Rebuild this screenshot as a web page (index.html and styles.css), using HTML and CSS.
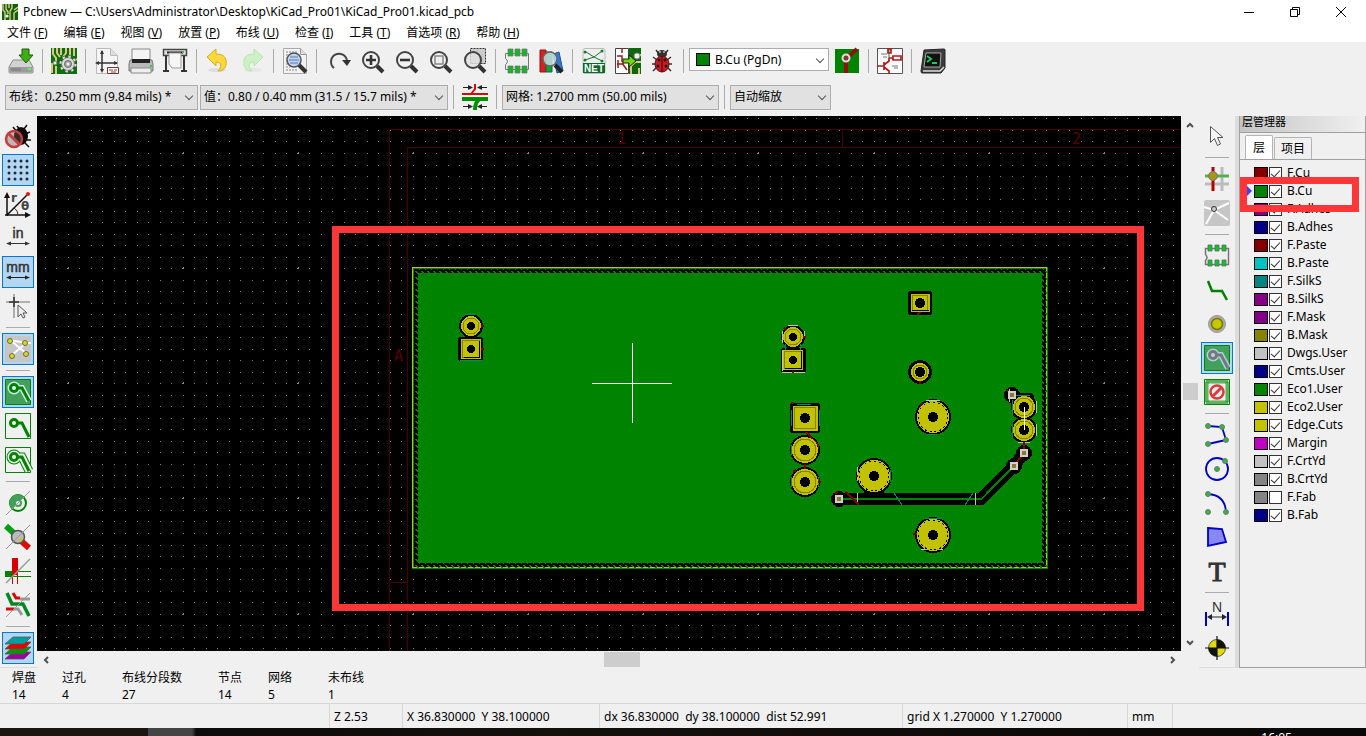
FILE: index.html
```html
<!DOCTYPE html>
<html lang="zh-CN">
<head>
    <meta charset="UTF-8">
    <meta name="viewport" content="width=device-width, initial-scale=1.0">
    <title>Pcbnew</title>
    <link rel="stylesheet" href="styles.css">
</head>
<body>
    <header class="titlebar">
        <svg class="app-icon" viewBox="0 0 16 16"><rect width="16" height="16" fill="#0a6408"/><path d="M1 0v6l2 2v8M4 0v5l2 3v2M7 0v4M10 0v4l-2 3v9M12 6l4-3M12 16V9l4-3" fill="none" stroke="#e0c48c" stroke-width="1.4"/><circle cx="5" cy="12" r="1.6" fill="#fff"/></svg>
        <h1>Pcbnew — C:\Users\Administrator\Desktop\KiCad_Pro01\KiCad_Pro01.kicad_pcb</h1>
        <div class="window-buttons">
            <button aria-label="最小化"><svg viewBox="0 0 12 12"><path d="M1 6.5h10"/></svg></button>
            <button aria-label="还原"><svg viewBox="0 0 12 12"><path d="M1.5 3.5h7v7h-7zM3.5 3.5v-2h7v7h-2"/></svg></button>
            <button aria-label="关闭"><svg viewBox="0 0 12 12"><path d="M1 1l10 10M11 1L1 11"/></svg></button>
        </div>
    </header>

    <nav class="menu">
        <button>文件 (<u>F</u>)</button>
        <button>编辑 (<u>E</u>)</button>
        <button>视图 (<u>V</u>)</button>
        <button>放置 (<u>P</u>)</button>
        <button>布线 (<u>U</u>)</button>
        <button>检查 (<u>I</u>)</button>
        <button>工具 (<u>T</u>)</button>
        <button>首选项 (<u>R</u>)</button>
        <button>帮助 (<u>H</u>)</button>
    </nav>

    <div class="toolbar">
        <button class="tool" aria-label="保存"><svg viewBox="0 0 26 26"><path d="M5 12h16l4 7v5q0 1-1 1H2q-1 0-1-1v-5z" fill="#d2d2d2" stroke="#8c8c8c"/><path d="M1.5 19h23v5h-23z" fill="#9c9c9c"/><path d="M4 20v3M6 20v3M8 20v3M10 20v3M12 20v3" stroke="#777"/><path d="M20 21h3" stroke="#5f5" stroke-width="2"/><path d="M14 1h7v6h4l-7 8-7-8h3z" fill="#3fae10" stroke="#17600a"/></svg></button>
        <i class="sep"></i>
        <button class="tool" aria-label="电路板设置"><svg viewBox="0 0 26 26"><path d="M0 0h26v26H0z" fill="#0a700a"/><path d="M2 0v6l3 4v4M6 0v5l3 4M10 0v7M15 0v5l-3 4M19 0v8M23 0v8M1 15v10M5 18v8M22 14l4-3" fill="none" stroke="#dec48a" stroke-width="2"/><circle cx="17" cy="16" r="7.5" fill="none" stroke="#555" stroke-width="3" stroke-dasharray="3 2.9"/><circle cx="17" cy="16" r="6.5" fill="#ddd" stroke="#666"/><circle cx="17" cy="16" r="7.5" fill="none" stroke="#ddd" stroke-width="2" stroke-dasharray="2.4 3.5"/><circle cx="17" cy="16" r="3.5" fill="#aaa" stroke="#666"/><circle cx="17" cy="16" r="1.5" fill="#eee"/><circle cx="4" cy="15" r="2" fill="#eee" stroke="#777"/></svg></button>
        <i class="sep"></i>
        <button class="tool" aria-label="页面设置"><svg viewBox="0 0 26 26"><path d="M2.5.5h14l7 7v18h-21z" fill="#f5f5f5" stroke="#bbb"/><path d="M16.5.5v7h7" fill="#ddd" stroke="#bbb"/><path d="M8 3v20M3 15h20" stroke="#333" stroke-width="1.5"/><path d="M8 2l-2 4h4zM8 25l-2-4h4zM1 15l4-2v4zM24 15l-4-2v4z" fill="#333"/><path d="M13.5 19.5h11v6h-11z" fill="#fff" stroke="#733"/><path d="M15 22h4M20 22h3M17 24h5" stroke="#844"/></svg></button>
        <button class="tool" aria-label="打印"><svg viewBox="0 0 26 26"><path d="M4 1h18v12H4z" fill="#f4f4f4" stroke="#888"/><path d="M2 12h22l1 4v7H1v-7z" fill="#b9b9b9" stroke="#777"/><path d="M4 11h18v4H4z" fill="#222"/><path d="M3 20h20v5H3z" fill="#eee" stroke="#888"/><path d="M22 18h2" stroke="#3c3" stroke-width="2"/></svg></button>
        <button class="tool" aria-label="绘制"><svg viewBox="0 0 26 26"><path d="M1.5 1.5h23v6h-23z" fill="#ddd" stroke="#444" stroke-width="1.5"/><path d="M5 4.500h16" stroke="#222" stroke-width="2"/><path d="M7 5h12v15H10l-3-4z" fill="#f7f7f7" stroke="#999"/><path d="M4 8v14M22 8v14M1 23h6M19 23h6" stroke="#333" stroke-width="2"/><path d="M20 4h2" stroke="#3c3" stroke-width="2"/></svg></button>
        <i class="sep"></i>
        <button class="tool" aria-label="撤销"><svg viewBox="0 0 26 26"><ellipse cx="12" cy="22" rx="9" ry="2" fill="#ddd"/><path d="M2 9l9-8v5c9 0 11 5 10 11-1 4-4 6-8 6 4-4 4-9-2-9v4z" fill="#f8d83a" stroke="#d8ac20"/></svg></button>
        <button class="tool" aria-label="重做"><svg viewBox="0 0 26 26"><ellipse cx="14" cy="22" rx="9" ry="2" fill="#e4e8e2"/><path d="M24 9l-9-8v5C6 6 4 11 5 17c1 4 4 6 8 6-4-4-4-9 2-9v4z" fill="#cdf0c4" stroke="#b9e4b0"/></svg></button>
        <i class="sep"></i>
        <button class="tool" aria-label="查找"><svg viewBox="0 0 26 26"><path d="M1.5.5h17l6 6v19h-23z" fill="#f2f2f2" stroke="#aaa"/><path d="M18.500.5v6h6" fill="#ddd" stroke="#999"/><path d="M4 4h11M4 7h4M4 10h3M4 13h3M4 16h3M4 19h4M4 22h12" stroke="#888" stroke-dasharray="2 1"/><path d="M17 17l7 7" stroke="#333" stroke-width="4"/><circle cx="12" cy="12" r="7" fill="#bfd5f0" stroke="#555" stroke-width="1.5"/><path d="M8 9h8M7 12h10M8 15h8" stroke="#5878b8"/></svg></button>
        <i class="sep"></i>
        <button class="tool" aria-label="刷新"><svg viewBox="0 0 26 26"><path d="M9 20A8 8 0 1 1 22 13" fill="none" stroke="#444" stroke-width="2"/><path d="M17 12h9l-4 6z" fill="#333"/></svg></button>
        <button class="tool" aria-label="放大"><svg viewBox="0 0 26 26"><path d="M18 18l6 6" stroke="#333" stroke-width="4"/><circle cx="12" cy="12" r="8" fill="#f2f2f2" stroke="#444" stroke-width="2"/><path d="M7 12h10M12 7v10" stroke="#333" stroke-width="2.600"/></svg></button>
        <button class="tool" aria-label="缩小"><svg viewBox="0 0 26 26"><path d="M18 18l6 6" stroke="#333" stroke-width="4"/><circle cx="12" cy="12" r="8" fill="#f2f2f2" stroke="#444" stroke-width="2"/><path d="M7 12h10" stroke="#333" stroke-width="2.600"/></svg></button>
        <button class="tool" aria-label="适合页面"><svg viewBox="0 0 26 26"><path d="M18 18l6 6" stroke="#333" stroke-width="4"/><circle cx="12" cy="12" r="8" fill="#f2f2f2" stroke="#444" stroke-width="2"/><path d="M8 8h8v8H8z" fill="#eee" stroke="#888" stroke-width="1.5"/></svg></button>
        <button class="tool" aria-label="缩放到选区"><svg viewBox="0 0 26 26"><path d="M9.500.5h15v15h-15z" fill="#ccc" stroke="#333" stroke-dasharray="2 1"/><path d="M18 18l6 6" stroke="#333" stroke-width="4"/><circle cx="12" cy="12" r="8" fill="#e2e2e2" fill-opacity=".8" stroke="#444" stroke-width="2"/></svg></button>
        <i class="sep"></i>
        <button class="tool" aria-label="封装编辑器"><svg viewBox="0 0 26 26"><path d="M1.5 5.500h23v16h-23v-5q4-3 0-6z" fill="#eee" stroke="#777"/><path d="M4 1h5v7H4zM11 1h5v7h-5zM18 1h5v7h-5zM4 18h5v7H4zM11 18h5v7h-5zM18 18h5v7h-5z" fill="#16b428" stroke="#777" stroke-width=".8"/></svg></button>
        <button class="tool" aria-label="封装浏览器"><svg viewBox="0 0 26 26"><path d="M2 2h6v22H2z" fill="#d82020" stroke="#911"/><path d="M8 4h6v20H8z" fill="#18a030" stroke="#165"/><path d="M15 6l6-2 4 19-6 2z" fill="#3478d8" stroke="#258"/><path d="M17 17l7 7" stroke="#222" stroke-width="4"/><circle cx="12" cy="11" r="7" fill="#d4e4ee" fill-opacity=".8" stroke="#666" stroke-width="1.5"/></svg></button>
        <i class="sep"></i>
        <button class="tool" aria-label="加载网表"><svg viewBox="0 0 26 26"><rect x="2" y=".5" width="22" height="25" rx="2" fill="#eee" stroke="#bbb"/><path d="M5 4l8 5 8-6M4 12l9-3 8 4" fill="none" stroke="#197a30"/><g fill="#197a30"><circle cx="4" cy="4" r="1.500"/><circle cx="21" cy="3" r="1.500"/><circle cx="4" cy="12" r="1.500"/><circle cx="21" cy="13" r="1.500"/></g><path d="M2 15h22v10H2z" fill="#0d6a2e"/><text class="net-label" x="13" y="24">NET</text></svg></button>
        <button class="tool" aria-label="从原理图更新"><svg viewBox="0 0 26 26"><path d="M.5.500h13v25H.5z" fill="#fff" stroke="#444"/><path d="M14 0h12v26H14z" fill="#0b680b"/><path d="M7 0v5M2 8h5v6M2 16h5l4-4M7 15l5 7M3 12v8" fill="none" stroke="#a01818" stroke-width="1.500"/><path d="M16 26v-8l4-4h6M21 7h5M24 26v-6" fill="none" stroke="#dec48a" stroke-width="2"/><circle cx="22" cy="8" r="3" fill="#eee" stroke="#888"/><path d="M8 11h6V7l7 6-7 6v-4H8z" fill="#76d415" stroke="#142c08"/></svg></button>
        <button class="tool" aria-label="设计规则检查"><svg viewBox="0 0 26 26"><path d="M7 2l3 4M19 2l-3 4M4 9l4 3M22 9l-4 3M3 16h4M23 16h-4M4 23l4-4M22 23l-4-4" stroke="#333" stroke-width="1.500"/><ellipse cx="13" cy="6" rx="5" ry="4" fill="#333"/><ellipse cx="13" cy="16" rx="7" ry="8" fill="#c81c24" stroke="#611"/><path d="M13 8v16" stroke="#400"/><g fill="#211"><circle cx="10" cy="12" r="1.500"/><circle cx="16" cy="12" r="1.500"/><circle cx="9" cy="18" r="1.500"/><circle cx="17" cy="18" r="1.500"/></g><path d="M10 4h2M14 4h2" stroke="#fff"/></svg></button>
        <i class="sep"></i>
        <span class="drop drop-layer">
            <i class="swatch c-green"></i>
            <select aria-label="当前层"><option>B.Cu (PgDn)</option></select>
        </span>
        <button class="tool" aria-label="层对"><svg viewBox="0 0 26 26"><path d="M1 1h24v24H1z" fill="#008400"/><path d="M12 25V12M14 9l9-8" stroke="#8c1212" stroke-width="4"/><circle cx="12" cy="10" r="3.500" fill="#8c3434" stroke="#ddd" stroke-width="2"/></svg></button>
        <i class="sep"></i>
        <button class="tool" aria-label="原理图编辑器"><svg viewBox="0 0 26 26"><path d="M.5.500h25v25H.5z" fill="#fbfbfb" stroke="#555"/><path d="M12 0v10" stroke="#19801d"/><path d="M11 1h3v4h-3zM16 8h8v4h-8zM12 10h4M0 18h7M7 14v8M7 17l5-4v-3M7 19l5 4v3" fill="none" stroke="#b01c1c" stroke-width="1.700"/><path d="M4 6h6M6 9h4M15 18h6M17 20h4" stroke="#777"/></svg></button>
        <i class="sep"></i>
        <button class="tool" aria-label="脚本控制台"><svg viewBox="0 0 26 26"><path d="M4 2l20-1q1 0 1 1v18l-4 5H2q-1 0-1-2z" fill="#3c3c3c" stroke="#222"/><path d="M6 5h15l-1 14H4z" fill="#111" stroke="#aaa"/><path d="M7 8l4 3-4 3M12 15h5" fill="none" stroke="#18c860" stroke-width="2"/><path d="M3 23h17l4-4" fill="none" stroke="#ddd" stroke-width="1.500"/></svg></button>
    </div>

    <div class="toolbar toolbar-options">
        <span class="drop drop-track"><select aria-label="布线宽度"><option>布线：0.250 mm (9.84 mils) *</option></select></span>
        <span class="drop drop-via"><select aria-label="过孔尺寸"><option>值：0.80 / 0.40 mm (31.5 / 15.7 mils) *</option></select></span>
        <i class="sep"></i>
        <button class="tool" aria-label="自动布线宽度"><svg viewBox="0 0 26 26"><path d="M0 10h26" stroke="#d80808" stroke-width="2"/><path d="M13 0v5l-4 5" fill="none" stroke="#d80808" stroke-width="2"/><path d="M0 15h26" stroke="#009000" stroke-width="4"/><path d="M17 16q-4 2-4 10" fill="none" stroke="#009000" stroke-width="4"/><path d="M1 3.500h7M25 3.500h-7M1 22.500h7M25 22.500h-7" stroke="#222"/><path d="M6 1l5 2.500-5 2.500zM20 1l-5 2.500 5 2.500zM6 20l5 2.500-5 2.500zM20 20l-5 2.500 5 2.500z" fill="#222"/></svg></button>
        <i class="sep"></i>
        <span class="drop drop-grid"><select aria-label="网格"><option>网格: 1.2700 mm (50.00 mils)</option></select></span>
        <i class="sep"></i>
        <span class="drop drop-zoom"><select aria-label="缩放"><option>自动缩放</option></select></span>
    </div>

    <main class="workspace">
        <div class="rail">
            <button class="tool" aria-label="关闭设计规则检查"><svg viewBox="0 0 26 26"><path d="M12 3l3 4M22 2l-3 4M25 9l-5 2M26 17h-5M24 24l-4-4M8 4l4 5" stroke="#111" stroke-width="1.500"/><ellipse cx="16" cy="13" rx="7" ry="9" fill="#0a0a0a"/><circle cx="9" cy="16" r="8" fill="#666" fill-opacity=".4" stroke="#c83c3c" stroke-width="2.500"/><path d="M4 11l10 10" stroke="#c83c3c" stroke-width="3"/></svg></button>
            <button class="tool on" aria-label="显示网格"><svg viewBox="0 0 26 26"><path d="M4 4h20M4 10h20M4 16h20M4 22h20" stroke="#222c38" stroke-width="3" stroke-linecap="round" stroke-dasharray="0 6"/></svg></button>
            <button class="tool" aria-label="极坐标"><svg viewBox="0 0 26 26"><path d="M2 25V4M0 24h22M2 24L22 4" fill="none" stroke="#111" stroke-width="1.500"/><path d="M2 1L-1 7h6zM26 24l-6-3v6z" fill="#111"/><path d="M9 17q4 2 4 7" fill="none" stroke="#333"/><circle cx="23" cy="3" r="2" fill="#f01010"/><text class="glyph" x="6" y="11">r</text><text class="glyph" x="16" y="19">θ</text></svg></button>
            <button class="tool" aria-label="英寸"><svg viewBox="0 0 26 26"><text class="unit" x="13" y="13">in</text><path d="M4 18.500h18" stroke="#333"/><path d="M1 18.500l5-2v4zM25 18.500l-5-2v4z" fill="#333"/></svg></button>
            <button class="tool on" aria-label="毫米"><svg viewBox="0 0 26 26"><text class="unit" x="13" y="13">mm</text><path d="M4 18.500h18" stroke="#222"/><path d="M1 18.500l5-2v4zM25 18.500l-5-2v4z" fill="#222"/></svg></button>
            <button class="tool" aria-label="光标形状"><svg viewBox="0 0 26 26"><path d="M1 9h24M9 1v24" stroke="#999" stroke-width="1.500"/><path d="M4 9h10M9 4v10" stroke="#333" stroke-width="1.500"/><path d="M13 12v12l3-3 2 4 2-1-2-4h4z" fill="#eee" stroke="#555"/></svg></button>
            <i class="rule"></i>
            <button class="tool on" aria-label="显示飞线"><svg viewBox="0 0 26 26"><rect width="26" height="26" rx="2" fill="#c6c6c6"/><path d="M5 4l16 3h5M5 4l17 14M21 7L6 20" stroke="#fff" stroke-width="2" fill="none"/><g fill="#d8e000" stroke="#666"><circle cx="5" cy="5" r="2.500"/><circle cx="20" cy="7" r="2.500"/><circle cx="7" cy="20" r="2.500"/><circle cx="21" cy="18" r="2.500"/></g></svg></button>
            <i class="rule"></i>
            <button class="tool on" aria-label="显示填充区域"><svg viewBox="0 0 26 26"><path d="M.5.500h25v25H.5z" fill="#42a05a" stroke="#048404"/><path d="M9 9h8l7 13" fill="none" stroke="#cfe6e8" stroke-width="6"/><circle cx="9" cy="9" r="6.500" fill="#cfe6e8"/><path d="M9 9h8l7 13" fill="none" stroke="#008400" stroke-width="3"/><circle cx="9" cy="9" r="3.500" fill="#dff" stroke="#008400" stroke-width="3"/></svg></button>
            <button class="tool" aria-label="隐藏填充区域"><svg viewBox="0 0 26 26"><path d="M.5.500h25v25H.5z" fill="none" stroke="#048404"/><path d="M9 10h8l7 14" fill="none" stroke="#008400" stroke-width="3"/><circle cx="9" cy="10" r="3.500" fill="#fff" stroke="#008400" stroke-width="3"/></svg></button>
            <button class="tool" aria-label="区域轮廓"><svg viewBox="0 0 26 26"><path d="M.5.500h25v25H.5z" fill="none" stroke="#048404"/><path d="M9 10h8l7 14" fill="none" stroke="#008400" stroke-width="9"/><circle cx="9" cy="10" r="7.500" fill="#008400"/><path d="M9 10h8l7 14" fill="none" stroke="#f0f0f0" stroke-width="7"/><circle cx="9" cy="10" r="6.500" fill="#f0f0f0"/><path d="M9 10h8l7 14" fill="none" stroke="#008400" stroke-width="3"/><circle cx="9" cy="10" r="3.500" fill="#fff" stroke="#008400" stroke-width="3"/></svg></button>
            <i class="rule"></i>
            <button class="tool" aria-label="焊盘轮廓"><svg viewBox="0 0 26 26"><circle cx="13" cy="13" r="8" fill="#eee" stroke="#008400" stroke-width="2"/><path d="M7 19A8 8 0 0 1 19 7z" fill="#42a05a"/><circle cx="13" cy="13" r="3" fill="#eee" stroke="#42a05a" stroke-width="2"/><path d="M1 25L25 1" stroke="#999"/></svg></button>
            <button class="tool" aria-label="过孔轮廓"><svg viewBox="0 0 26 26"><path d="M1 2l11 10" stroke="#00a010" stroke-width="6"/><path d="M14 15l10 9" stroke="#e00808" stroke-width="6"/><circle cx="13" cy="13" r="6.500" fill="#bbb" stroke="#555" stroke-width="1.500"/><path d="M13 17l4-4v4z" fill="#dfc200"/><path d="M1 25L25 1" stroke="#999"/></svg></button>
            <button class="tool" aria-label="布线轮廓"><svg viewBox="0 0 26 26"><path d="M10 0v26" stroke="#d80000" stroke-width="6"/><path d="M0 16h8" stroke="#008400" stroke-width="6"/><path d="M8 17h5v9H8z" fill="#f0f0f0"/><path d="M7.500 13v13M12.500 13v13" stroke="#d80000"/><path d="M12 13.500h14M8 18.500h18" stroke="#008400"/><path d="M1 25L25 1" stroke="#999" stroke-width="1.500"/></svg></button>
            <button class="tool" aria-label="高对比度"><svg viewBox="0 0 26 26"><path d="M2 1l5 11h11l6 12" fill="none" stroke="#008a20" stroke-width="3.500"/><path d="M8 1l3 5h4" fill="none" stroke="#d80808" stroke-width="3"/><path d="M15 7h10M9 17h4l4 6" fill="none" stroke="#999" stroke-width="3"/><path d="M1 17h8" stroke="#d80808" stroke-width="3"/><path d="M1 25L25 1" stroke="#999"/></svg></button>
            <i class="rule"></i>
            <button class="tool on" aria-label="层管理器"><svg viewBox="0 0 26 26"><g stroke="#555" stroke-width=".8"><path d="M8 17h18l-7 7H0z" fill="#a000a0"/><path d="M8 12h18l-7 7H0z" fill="#00980c"/><path d="M8 7h18l-7 7H0z" fill="#e60000"/><path d="M8 2h18l-7 7H0z" fill="#00a0a0"/></g></svg></button>
        </div>

        <section class="view">
            <svg class="board" viewBox="37 116 1144 535" preserveAspectRatio="xMinYMin slice">
                <defs>
                    <pattern id="hatch" width="6" height="6" patternUnits="userSpaceOnUse">
                        <rect width="6" height="6" fill="#000"/>
                        <path d="M1 1h1v1h1v1h1v1h1v1h1" fill="none" stroke="#008400"/>
                    </pattern>
                </defs>
                <path id="grid-dots" class="dots"/>
                <g class="sheet">
                    <path d="M389.500 651V129.500H1181M407.500 651V147.500H1181M389 582.500h18M842.500 129v18"/>
                    <text x="617" y="144">1</text>
                    <text x="1072" y="144">2</text>
                    <text x="394" y="361">A</text>
                </g>
                <rect x="412" y="267" width="636" height="302" fill="#008400"/>
                <path d="M414 269h632v298H414zM418 273v290h624V273z" fill="url(#hatch)" fill-rule="evenodd"/>
                <path class="edge" d="M412.500 568V267.500H1047"/>
                <path class="edge edge-dash" d="M412 567.500h634.500V268"/>

                <!-- clearances cut out of the copper zone -->
                <g class="clear">
                    <circle cx="471" cy="326" r="12"/><rect x="458" y="337" width="25" height="24" rx="3"/>
                    <circle cx="793" cy="337" r="12"/><rect x="781" y="348" width="25" height="25" rx="3"/>
                    <rect x="908" y="291" width="24" height="24" rx="3"/><circle cx="920" cy="372" r="12"/>
                    <rect x="790" y="403" width="30" height="30" rx="3"/><circle cx="805" cy="450" r="15"/><circle cx="805" cy="482" r="15"/>
                    <circle cx="933" cy="417" r="18"/><circle cx="874" cy="476" r="18"/><circle cx="933" cy="535" r="18"/>
                    <path d="M864 485h20v10h-20z"/>
                    <circle cx="1024" cy="407" r="13"/><circle cx="1024" cy="430" r="13"/><rect x="1012" y="393" width="22" height="24" rx="4"/>
                    <circle cx="1012" cy="395" r="8"/><circle cx="1024" cy="453" r="8"/><circle cx="1014" cy="466" r="8"/><circle cx="839" cy="499" r="8"/>
                </g>
                <path class="gap" d="M839 499h142.500l32.500-33 10-13"/>
                <path class="track" d="M839 499h142.500l32.500-33"/>

                <g class="silk-white">
                    <path d="M788 325.500h10M782.500 331v12M782.500 350v21M782 372.500h23M804.500 331v6M857.500 493v12M975.500 493v12"/>
                    <path d="M1036.500 401v12M1036.500 424v12M1018 442.500h12M926 400.500h14M857.500 467v14M921 549.500h22M1009.500 389v13"/>
                </g>
                <g class="silk-teal">
                    <path d="M465 314.500h10M460 360.500h22M785.500 344v6M800.500 344v6M894 493l8 12M973 493l-8 12M797 404.500h14M791.500 410v16M819.500 410v16"/>
                    <path d="M791.500 445v10M791.500 477v10M818.500 477v10M1013 395.500h17M1012.500 400v16M1012.500 424v14M925 518.500h17M927 434.500h10M890.500 470v12"/>
                </g>
                <g class="silk-red">
                    <path d="M806 432l12 13v4M805 464v7M846 492l13 13M1024 442v11l-10 13M479 326h5M478 349h6M806 337h-4M793 371v2M917 315l3-3M920 380v4M818 482h3M913 534h4M856 476h4M791 403h3M920 408l2-5M838 492l-3 1M1007 390l3 3M793 472l3-2M784 328l3 3"/>
                </g>

                <g class="pads">
                    <circle cx="471" cy="326" r="10"/><rect x="461" y="339" width="20" height="20"/>
                    <circle cx="793" cy="337" r="10"/><rect x="783" y="350" width="20" height="20"/>
                    <rect x="911" y="294" width="19" height="18"/><circle cx="920" cy="372" r="9"/>
                    <rect x="793" y="406" width="25" height="25"/><circle cx="805" cy="450" r="13"/><circle cx="805" cy="482" r="13"/>
                    <circle cx="1024" cy="407" r="11"/><circle cx="1024" cy="430" r="11"/>
                    <circle cx="933" cy="417" r="16"/><circle cx="874" cy="476" r="16"/><circle cx="933" cy="535" r="16"/>
                </g>
                <g class="mask">
                    <circle cx="471" cy="326" r="8"/><rect x="462.500" y="340.500" width="17" height="17"/>
                    <circle cx="793" cy="337" r="8"/><rect x="784.500" y="351.500" width="17" height="17"/>
                    <rect x="912.500" y="295.500" width="15" height="15"/><circle cx="920" cy="372" r="7"/>
                    <rect x="794.500" y="407.500" width="21" height="21"/><circle cx="805" cy="450" r="11"/><circle cx="805" cy="482" r="11"/>
                    <circle cx="1024" cy="407" r="9"/><circle cx="1024" cy="430" r="9"/>
                </g>
                <g class="mask mask-dark">
                    <path d="M479.500 341v17M464 357.500h16M801.500 351v18M785 368.500h17M912 310.500h17"/>
                    <circle cx="933" cy="417" r="15"/><circle cx="874" cy="476" r="15"/><circle cx="933" cy="535" r="15"/>
                </g>
                <path class="holes" d="M471 326h0M471 349h0M793 337h0M793 360h0"/>
                <path class="holes holes-wide" d="M920 303h0M920 372h0M805 418h0M805 450h0M805 482h0M1024 407h0M1024 430h0M933 417h0M874 476h0M933 535h0"/>

                <g class="vias">
                    <rect x="1009" y="392" width="6" height="6"/><rect x="1021" y="450" width="6" height="6"/>
                    <rect x="1011" y="463" width="6" height="6"/><rect x="836" y="496" width="6" height="6"/>
                </g>
                <path class="cursor" d="M632.500 343v80M592 383.500h80M1024.500 407v23"/>
                <rect class="callout" x="335.500" y="229.500" width="805" height="378"/>
            </svg>
            <div class="scroll scroll-v">
                <button aria-label="向上滚动"><svg viewBox="0 0 10 10"><path d="M2 7l3-3 3 3"/></svg></button>
                <span class="thumb"></span>
                <button aria-label="向下滚动"><svg viewBox="0 0 10 10"><path d="M2 3l3 3 3-3"/></svg></button>
            </div>
            <div class="scroll scroll-h">
                <button aria-label="向左滚动"><svg viewBox="0 0 10 10"><path d="M7 2L4 5l3 3"/></svg></button>
                <span class="thumb"></span>
                <button aria-label="向右滚动"><svg viewBox="0 0 10 10"><path d="M3 2l3 3-3 3"/></svg></button>
            </div>
        </section>

        <div class="rail rail-right">
            <button class="tool" aria-label="选择"><svg viewBox="0 0 26 26"><path d="M6.500 3.500v16l4-4 3 7 3-1.500-3-6.500h5.500z" fill="#f6f6f6" stroke="#555"/></svg></button>
            <i class="rule"></i>
            <button class="tool" aria-label="高亮网络"><svg viewBox="0 0 26 26"><path d="M18 1v24M1 18h24" stroke="#bbb" stroke-width="3"/><path d="M9 1v24" stroke="#b80000" stroke-width="3"/><path d="M1 10h24" stroke="#52b052" stroke-width="3"/><circle cx="9" cy="10" r="4.500" fill="#a89418" stroke="#777"/></svg></button>
            <button class="tool" aria-label="本地飞线"><svg viewBox="0 0 26 26"><rect width="26" height="26" rx="2" fill="#c6c6c6"/><path d="M0 7l10 3 15-7M10 10L2 24M10 10l14 10" fill="none" stroke="#fff" stroke-width="2"/><circle cx="10" cy="9" r="2.500" fill="#ccc" stroke="#333"/></svg></button>
            <i class="rule"></i>
            <button class="tool" aria-label="添加封装"><svg viewBox="0 0 26 26"><path d="M1.500 5.500h23v16h-23v-4q3-3 0-6z" fill="#eee" stroke="#777" stroke-width="1.500"/><path d="M4 2h4v6H4zM11 2h4v6h-4zM18 2h4v6h-4zM4 17h4v6H4zM11 17h4v6h-4zM18 17h4v6h-4z" fill="#08c828" stroke="#666" stroke-width=".8"/></svg></button>
            <button class="tool" aria-label="布线"><svg viewBox="0 0 26 26"><path d="M4 4l4 10h10l5 9" fill="none" stroke="#008000" stroke-width="2.500"/></svg></button>
            <button class="tool" aria-label="添加过孔"><svg viewBox="0 0 26 26"><circle cx="13" cy="13" r="8.500" fill="#aaa" stroke="#999"/><circle cx="13" cy="13" r="5.500" fill="#c8c800" stroke="#777700" stroke-width="1.500"/></svg></button>
            <button class="tool on" aria-label="添加填充区域"><svg viewBox="0 0 26 26"><path d="M.5.500h25v25H.5z" fill="#42a05a" stroke="#048404"/><path d="M9 10h8l7 13" fill="none" stroke="#a6d0e4" stroke-width="6"/><circle cx="9" cy="10" r="6.500" fill="#a6d0e4"/><path d="M9 10h8l7 13" fill="none" stroke="#777" stroke-width="3"/><circle cx="9" cy="10" r="3.500" fill="#b3d6e8" stroke="#777" stroke-width="3"/></svg></button>
            <button class="tool" aria-label="添加禁布区"><svg viewBox="0 0 26 26"><path d="M2.500 2.500h21v21h-21z" fill="#f0f0f0" stroke="#b0e0b0" stroke-width="4"/><path d="M2.500 2.500h21v21h-21z" fill="none" stroke="#108410" stroke-width="4" stroke-dasharray="1 1"/><path d="M.5.500h25v25H.5z" fill="none" stroke="#048404"/><circle cx="13" cy="13" r="6.500" fill="#eee" stroke="#d83c3c" stroke-width="2.500"/><path d="M17 9l-8 8" stroke="#d83c3c" stroke-width="3"/></svg></button>
            <i class="rule"></i>
            <button class="tool" aria-label="绘制线"><svg viewBox="0 0 26 26"><path d="M4 4l14 1 4 13-18 4" fill="none" stroke="#0000c8" stroke-width="1.800"/><g fill="#2cb83c" stroke="#777"><circle cx="4" cy="4" r="2.500"/><circle cx="18" cy="5" r="2.500"/><circle cx="22" cy="18" r="2.500"/><circle cx="4" cy="22" r="2.500"/></g></svg></button>
            <button class="tool" aria-label="绘制圆"><svg viewBox="0 0 26 26"><circle cx="13" cy="13" r="11" fill="none" stroke="#0000c8" stroke-width="1.800"/><g fill="#2cb83c" stroke="#777"><circle cx="13" cy="13" r="2.500"/><circle cx="21" cy="5" r="2.500"/></g></svg></button>
            <button class="tool" aria-label="绘制圆弧"><svg viewBox="0 0 26 26"><path d="M4 4Q21 5 22 22" fill="none" stroke="#0000c8" stroke-width="1.800"/><g fill="#2cb83c" stroke="#777"><circle cx="4" cy="4" r="2.500"/><circle cx="4" cy="22" r="2.500"/><circle cx="22" cy="22" r="2.500"/></g></svg></button>
            <button class="tool" aria-label="绘制多边形"><svg viewBox="0 0 26 26"><path d="M4 4l14 1 4 13-18 4z" fill="#8888f4" stroke="#0000c8" stroke-width="1.800"/></svg></button>
            <button class="tool" aria-label="添加文本"><svg viewBox="0 0 26 26"><text class="big-t" x="13" y="23">T</text></svg></button>
            <i class="rule"></i>
            <button class="tool" aria-label="添加尺寸标注"><svg viewBox="0 0 26 26"><text class="dim-n" x="13" y="11">N</text><path d="M2 11v14M24 11v14" stroke="#0000c8" stroke-width="2"/><path d="M5 16h16" stroke="#222"/><path d="M3 16l5-3v6zM23 16l-5-3v6z" fill="#222"/></svg></button>
            <button class="tool" aria-label="层对齐目标"><svg viewBox="0 0 26 26"><circle cx="13" cy="13" r="8.500" fill="#e0dc00" stroke="#555"/><path d="M13 4.500A8.500 8.500 0 0 1 21.500 13H13zM13 21.500A8.500 8.500 0 0 1 4.500 13H13z" fill="#111"/><path d="M13 1v24M1 13h24" stroke="#111" stroke-width="1.200"/></svg></button>
        </div>

        <aside class="layers">
            <h2>层管理器</h2>
            <div class="tabs">
                <button class="tab active">层</button>
                <button class="tab">项目</button>
            </div>
            <ul>
                <li><i class="swatch c-maroon"></i><label><input type="checkbox" checked>F.Cu</label></li>
                <li class="current"><i class="swatch c-green"></i><label><input type="checkbox" checked>B.Cu</label></li>
                <li><i class="swatch c-purple"></i><label><input type="checkbox" checked>F.Adhes</label></li>
                <li><i class="swatch c-navy"></i><label><input type="checkbox" checked>B.Adhes</label></li>
                <li><i class="swatch c-maroon"></i><label><input type="checkbox" checked>F.Paste</label></li>
                <li><i class="swatch c-cyan"></i><label><input type="checkbox" checked>B.Paste</label></li>
                <li><i class="swatch c-teal"></i><label><input type="checkbox" checked>F.SilkS</label></li>
                <li><i class="swatch c-purple"></i><label><input type="checkbox" checked>B.SilkS</label></li>
                <li><i class="swatch c-purple"></i><label><input type="checkbox" checked>F.Mask</label></li>
                <li><i class="swatch c-olive"></i><label><input type="checkbox" checked>B.Mask</label></li>
                <li><i class="swatch c-silver"></i><label><input type="checkbox" checked>Dwgs.User</label></li>
                <li><i class="swatch c-navy"></i><label><input type="checkbox" checked>Cmts.User</label></li>
                <li><i class="swatch c-green"></i><label><input type="checkbox" checked>Eco1.User</label></li>
                <li><i class="swatch c-yellow"></i><label><input type="checkbox" checked>Eco2.User</label></li>
                <li><i class="swatch c-yellow"></i><label><input type="checkbox" checked>Edge.Cuts</label></li>
                <li><i class="swatch c-magenta"></i><label><input type="checkbox" checked>Margin</label></li>
                <li><i class="swatch c-silver"></i><label><input type="checkbox" checked>F.CrtYd</label></li>
                <li><i class="swatch c-gray"></i><label><input type="checkbox" checked>B.CrtYd</label></li>
                <li><i class="swatch c-gray"></i><label><input type="checkbox">F.Fab</label></li>
                <li><i class="swatch c-navy"></i><label><input type="checkbox" checked>B.Fab</label></li>
            </ul>
        </aside>
    </main>

    <dl class="stats">
        <div><dt>焊盘</dt><dd>14</dd></div>
        <div><dt>过孔</dt><dd>4</dd></div>
        <div><dt>布线分段数</dt><dd>27</dd></div>
        <div><dt>节点</dt><dd>14</dd></div>
        <div><dt>网络</dt><dd>5</dd></div>
        <div><dt>未布线</dt><dd>1</dd></div>
    </dl>

    <footer class="status">
        <span></span>
        <span>Z 2.53</span>
        <span>X 36.830000&nbsp; Y 38.100000</span>
        <span>dx 36.830000&nbsp; dy 38.100000&nbsp; dist 52.991</span>
        <span>grid X 1.270000&nbsp; Y 1.270000</span>
        <span>mm</span>
        <span></span>
    </footer>
    <div class="taskbar"><time>16:05</time></div>

    <script>
        // Grid: 1.27 mm spacing, every tenth crossing is drawn larger
        const step = 11.515;
        let d = '';
        for (let row = -3; row < 44; row++) {
            for (let col = -32; col < 67; col++) {
                const x = Math.round(413 + col * step);
                const y = Math.round(153 + row * step);
                d += `M${x} ${y}h1v1h-1z`;
                if (row % 10 === 0 && col % 10 === 0) {
                    d += `M${x - 1} ${y}h2v1h-2zM${x} ${y - 1}h1v1h-1z`;
                }
            }
        }
        document.getElementById('grid-dots').setAttribute('d', d);
    </script>
</body>
</html>
```
FILE: styles.css
```css
*,
*::before,
*::after {
    box-sizing: border-box;
}
body {
    margin: 0;
    height: 100vh;
    display: flex;
    flex-direction: column;
    overflow: hidden;
    background: #f0f0f0;
    color: #000;
    font: 12px/18px "Noto Sans", "Noto Sans CJK SC", sans-serif;
}
button {
    padding: 0;
    border: 0;
    background: none;
    color: inherit;
    font: inherit;
}
svg {
    display: block;
}

/* title and menu */
.titlebar {
    display: flex;
    align-items: center;
    height: 24px;
    padding-left: 2px;
    background: #fff;
}
.app-icon {
    width: 16px;
    height: 16px;
}
.titlebar h1 {
    flex: 1;
    margin: 0 0 0 5px;
    font-size: 12px;
    font-weight: normal;
    white-space: nowrap;
}
.window-buttons {
    display: flex;
    padding-right: 2px;
}
.window-buttons button {
    width: 46px;
    height: 22px;
    display: grid;
    place-items: center;
}
.window-buttons svg {
    width: 12px;
    height: 12px;
    fill: none;
    stroke: #000;
}
.menu {
    display: flex;
    gap: 16px;
    height: 18px;
    padding-left: 7px;
    background: #fff;
}
.menu button {
    white-space: nowrap;
}

/* toolbars */
.toolbar {
    display: flex;
    align-items: center;
    gap: 2px;
    height: 38px;
    padding-left: 5px;
}
.toolbar-options {
    height: 36px;
    padding-bottom: 2px;
}
.tool {
    flex: none;
    width: 32px;
    height: 32px;
    display: grid;
    place-items: center;
    border: 1px solid transparent;
}
.tool svg {
    width: 26px;
    height: 26px;
    overflow: visible;
}
.tool.on {
    border-color: #0078d7;
    background: #b3d7f3;
}
.sep {
    width: 1px;
    height: 24px;
    margin: 0 3px;
    background: #aaa;
}
.drop {
    position: relative;
    display: block;
    height: 25px;
}
.drop select {
    width: 100%;
    height: 100%;
    padding: 0 20px 0 3px;
    appearance: none;
    border: 1px solid #adadad;
    border-radius: 0;
    background: #e1e1e1;
    color: #000;
    font: inherit;
}
.drop::after {
    content: "";
    position: absolute;
    right: 6px;
    top: 8px;
    width: 6px;
    height: 6px;
    border: solid #555;
    border-width: 0 1px 1px 0;
    transform: rotate(45deg);
    pointer-events: none;
}
.drop-track {
    width: 193px;
}
.drop-via {
    width: 248px;
}
.drop-grid {
    width: 217px;
}
.drop-zoom {
    width: 101px;
}
.drop-layer {
    width: 140px;
    height: 23px;
    margin-bottom: 3px;
}
.drop-layer select {
    padding-left: 25px;
    background: #fff;
}
.drop-layer .swatch {
    position: absolute;
    left: 7px;
    top: 5px;
}

/* icon lettering */
.net-label {
    font: bold 10px "Liberation Sans", sans-serif;
    fill: #fff;
    text-anchor: middle;
}
.glyph {
    font: bold 12px "DejaVu Sans", sans-serif;
    fill: #444;
}
.unit {
    font: 14px "Liberation Sans", sans-serif;
    fill: #333;
    stroke: #333;
    stroke-width: 0.5;
    text-anchor: middle;
}
.big-t {
    font: 28px "Liberation Serif", serif;
    fill: #333;
    stroke: #333;
    text-anchor: middle;
}
.dim-n {
    font: 14px "Liberation Sans", sans-serif;
    fill: #333;
    text-anchor: middle;
}

/* workspace */
.workspace {
    flex: 1;
    min-height: 0;
    display: flex;
}
.rail {
    flex: none;
    width: 37px;
    display: flex;
    flex-direction: column;
    gap: 2px;
    padding: 4px 0 0 2px;
    border-bottom: 1px solid #dcdcdc;
}
.rail-right {
    width: 40px;
    border-right: 4px solid #dcdcdc;
}
.rule {
    flex: none;
    width: 24px;
    height: 1px;
    margin: 3px 4px;
    background: #aaa;
}
.view {
    flex: 1;
    min-width: 0;
    display: grid;
    grid-template-columns: minmax(0, 1fr) 18px;
    grid-template-rows: minmax(0, 1fr) 17px;
}
.scroll {
    display: flex;
    align-items: center;
    justify-content: space-between;
}
.scroll-v {
    flex-direction: column;
}
.scroll button {
    width: 17px;
    height: 17px;
    display: grid;
    place-items: center;
}
.scroll svg {
    width: 10px;
    height: 10px;
    fill: none;
    stroke: #505050;
    stroke-width: 2;
}
.thumb {
    width: 15px;
    height: 17px;
    margin-top: 16px;
    background: #cdcdcd;
}
.scroll-h .thumb {
    width: 36px;
    height: 15px;
    margin: 0 0 0 26px;
}

/* board drawing */
.board {
    width: 100%;
    height: 100%;
    background: #000;
    shape-rendering: crispEdges;
}
.dots {
    fill: #848484;
}
.sheet path {
    fill: none;
    stroke: #480000;
}
.sheet text {
    font: 15px "DejaVu Sans Mono", monospace;
    fill: #580000;
}
.edge {
    fill: none;
    stroke: #c2c200;
}
.edge-dash {
    stroke-dasharray: 5 2;
}
.gap {
    fill: none;
    stroke: #000;
    stroke-width: 12;
}
.track {
    fill: none;
    stroke: #008400;
    stroke-width: 2;
}
.silk-white path {
    stroke: #c2c2c2;
}
.silk-teal path {
    fill: none;
    stroke: #008484;
}
.silk-red path {
    fill: none;
    stroke: #840000;
    stroke-width: 2;
}
.pads {
    fill: #c2c200;
}
.mask {
    fill: none;
    stroke: #848400;
}
.mask-dark {
    stroke: #000;
}
.mask-dark circle {
    stroke-dasharray: 2 3;
}
.holes {
    stroke: #000;
    stroke-width: 8;
    stroke-linecap: round;
}
.holes-wide {
    stroke-width: 10;
}
.vias {
    fill: #8c7828;
    stroke: #d0d0d0;
    stroke-width: 2;
}
.cursor {
    stroke: #fff;
}
.callout {
    fill: none;
    stroke: #fd3737;
    stroke-width: 7;
}

/* layer manager */
.layers {
    flex: none;
    width: 127px;
    border: solid #a0a0a0;
    border-width: 0 1px 1px;
}
.layers h2 {
    height: 17px;
    margin: 0;
    padding-left: 2px;
    border-bottom: 1px solid #a0a0a0;
    background: linear-gradient(90deg, #c4c4c4, #f0f0f0);
    font-size: 11px;
    font-weight: normal;
    line-height: 12px;
}
.tabs {
    display: flex;
    align-items: flex-end;
    gap: 1px;
    height: 27px;
    padding-left: 5px;
    border-bottom: 1px solid #a0a0a0;
}
.tab {
    height: 22px;
    padding: 0 6px;
    border: 1px solid #b4b4b4;
    border-bottom: 0;
    border-radius: 2px 2px 0 0;
}
.tab.active {
    height: 24px;
    padding: 0 7px;
    background: #fff;
}
.layers ul {
    margin: 4px 0 0;
    padding: 0;
    list-style: none;
}
.layers li {
    position: relative;
    display: flex;
    align-items: center;
    gap: 1px;
    height: 18px;
    padding-left: 14px;
}
.layers label {
    display: flex;
    align-items: center;
    gap: 5px;
}
.layers input {
    position: relative;
    width: 13px;
    height: 13px;
    margin: 0;
    appearance: none;
    border: 1px solid #333;
    background: #fff;
}
.layers input:checked::after {
    content: "";
    position: absolute;
    left: 3px;
    top: 0;
    width: 5px;
    height: 9px;
    border: solid #333;
    border-width: 0 1px 1px 0;
    transform: rotate(42deg);
}
.current::before {
    content: "";
    position: absolute;
    left: 7px;
    top: 4px;
    border: 5px solid transparent;
    border-left-color: #4040ff;
    border-right: 0;
}
.current::after {
    content: "";
    position: absolute;
    z-index: 1;
    left: 0;
    right: 6px;
    top: -5px;
    height: 35px;
    border: 7px solid #fd3737;
}
.swatch {
    width: 14px;
    height: 13px;
    border: 1px solid #000;
}
.c-maroon { background: #840000; }
.c-green { background: #008400; }
.c-purple { background: #840084; }
.c-navy { background: #000084; }
.c-cyan { background: #00c2c2; }
.c-teal { background: #008484; }
.c-olive { background: #848400; }
.c-silver { background: #c2c2c2; }
.c-yellow { background: #c2c200; }
.c-magenta { background: #c200c2; }
.c-gray { background: #848484; }

/* bottom information */
.stats {
    display: grid;
    grid-template-columns: 50px 60px 96px 50px 60px auto;
    height: 35px;
    margin: 0;
    padding: 1px 0 0 12px;
    line-height: 17px;
}
.stats dd {
    margin: 0;
}
.status {
    display: flex;
    height: 25px;
    border-top: 1px solid #d7d7d7;
    line-height: 26px;
}
.status span {
    flex: 0 1 45px;
    padding-left: 4px;
    border-left: 1px solid #d7d7d7;
    white-space: nowrap;
}
.status span:first-child {
    flex-basis: 329px;
    border-left: 0;
}
.status span:nth-child(2) {
    flex-basis: 73px;
}
.status span:nth-child(3) {
    flex-basis: 197px;
}
.status span:nth-child(4) {
    flex-basis: 303px;
}
.status span:nth-child(5) {
    flex-basis: 225px;
}
.status span:last-child {
    flex: 1;
}
.taskbar {
    display: flex;
    justify-content: flex-end;
    height: 8px;
    padding-right: 74px;
    overflow: hidden;
    background: linear-gradient(90deg, #1c1410 0 148px, #444 148px 192px, #0c0c0c 196px, #14100c 40%, #080808);
    color: #fff;
}
.taskbar time {
    padding-top: 1px;
}
```
